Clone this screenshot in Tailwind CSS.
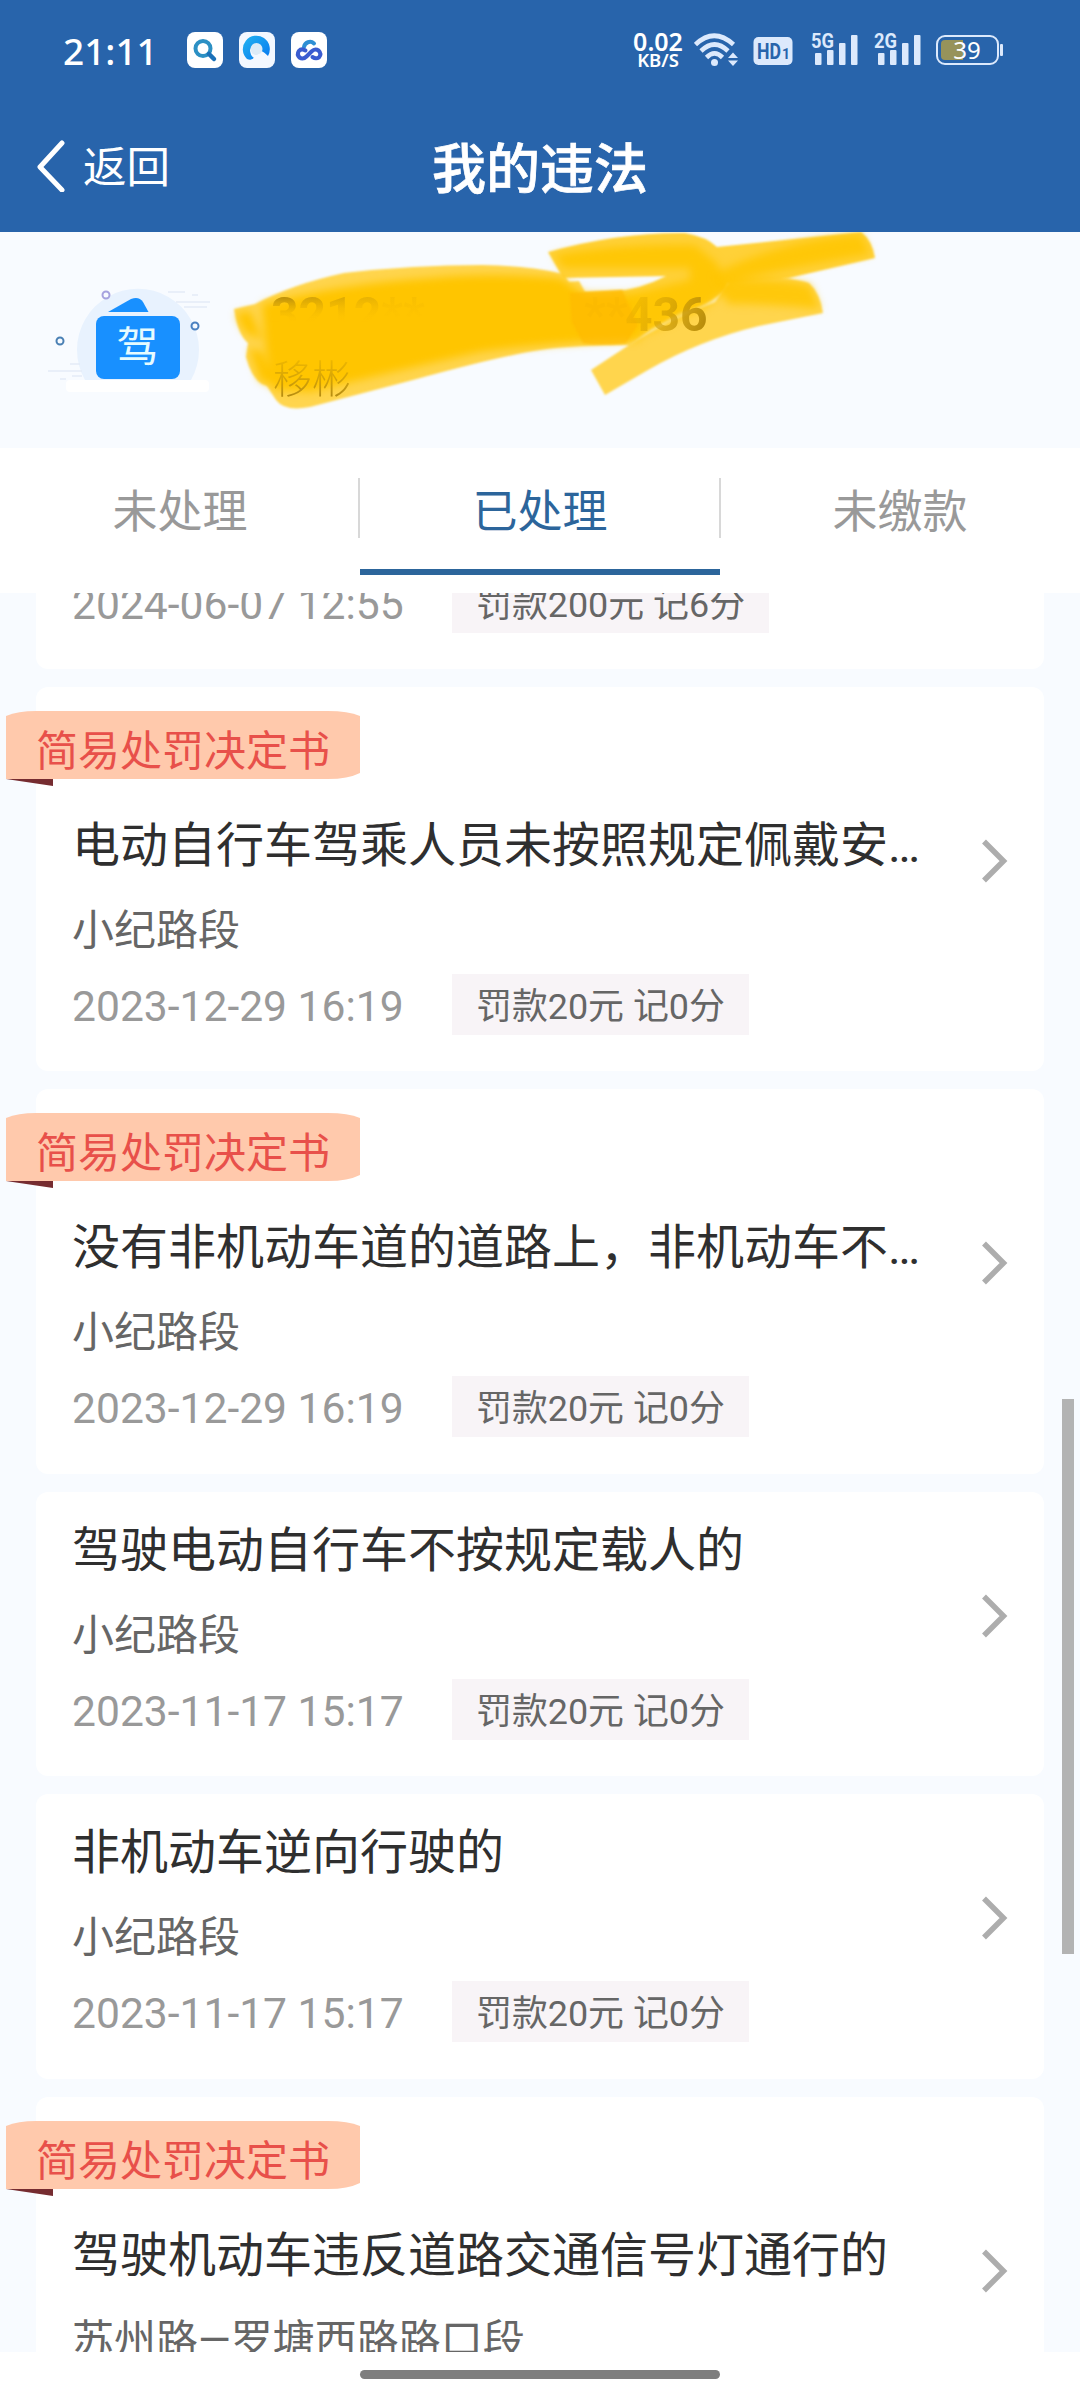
<!DOCTYPE html>
<html lang="zh-CN">
<head>
<meta charset="utf-8">
<title>我的违法</title>
<script src="https://cdn.jsdelivr.net/npm/@tailwindcss/browser@4"></script>
</head>
<body class="w-[1080px] h-[2400px] overflow-hidden bg-[#f8fbff] font-['Roboto','Noto_Sans_CJK_SC',sans-serif]">
<div class="relative flex flex-col h-[2400px]">

  <header class="h-[232px] shrink-0 bg-[#2864ab] text-white">
    <div class="flex items-center h-[100px] pl-[63px] pr-[77px]">
      <span class="w-[124px] text-[37px] font-medium leading-none font-['Noto_Sans',sans-serif]">21:11</span>
      <div class="flex gap-4">
        <svg width="36" height="36" viewBox="0 0 36 36"><rect width="36" height="36" rx="8" fill="#fff"/><circle cx="16" cy="16.500" r="7.500" fill="none" stroke="#2c90c4" stroke-width="4"/><path d="M22 22l5 5" stroke="#1a70b8" stroke-width="4.500" stroke-linecap="round"/></svg>
        <svg width="36" height="36" viewBox="0 0 36 36"><defs><linearGradient id="q" x1="0" y1="0" x2="1" y2="1"><stop offset="0" stop-color="#22b4f0"/><stop offset="1" stop-color="#0878f0"/></linearGradient></defs><rect width="36" height="36" rx="8" fill="#f3f8ff"/><path d="M8 27A13.500 13.500 0 1 1 29 24Q25 20 22.500 19A6 6 0 0 0 11 18Q11 23 15 26Q12 29 8 27Z" fill="url(#q)"/><circle cx="17.500" cy="17" r="6" fill="#dcebf7"/><path d="M9 29q5-1 8-5 4-4 8-2 2 3 6 3l-1 6H9z" fill="#f3f8ff"/></svg>
        <svg width="36" height="36" viewBox="0 0 36 36"><rect width="36" height="36" rx="8" fill="#fff"/><g fill="none" stroke-width="4" stroke-linecap="round"><path d="M13 15a6 6 0 0 1 10-3.500" stroke="#2e8fd4"/><path d="M14.500 18.500Q10.500 16 7.800 19Q5.500 22.500 8.500 25.500Q12 28 15.500 24.500L20.500 19.500Q24 16 27.500 18.500Q31 22 28 25.300Q25 27.500 21.500 25" stroke="#3a5cd0"/></g></svg>
      </div>
      <div class="ml-auto flex items-center">
        <div class="w-[58px] -ml-2 mr-[3px] text-center leading-none font-semibold">
          <div class="text-[25px] h-[20px] leading-[20px] font-['Noto_Sans',sans-serif]">0.02</div>
          <div class="text-[18.500px] h-[18px] leading-[18px] font-['Noto_Sans',sans-serif]">KB/S</div>
        </div>
        <svg class="ml-[4px]" width="46" height="36" viewBox="0 0 46 36" fill="#dce9fc"><g fill="none" stroke="#dce9fc" stroke-width="4.600"><path d="M1.500 12.500Q20 -5 39.500 12.500"/><path d="M7 19Q20.500 6 34 19"/><path d="M12.500 25.500Q20.500 17.500 28.500 25.500"/></g><circle cx="20.500" cy="30.500" r="3.500"/><path d="M34 26l5-5.500 5 5.500zM34 28.500l5 5.500 5-5.500z"/></svg>
        <svg class="ml-[13px]" width="40" height="30" viewBox="0 0 40 30"><rect x="0.500" y="2" width="39" height="28" rx="5" fill="#dce9fc"/><text x="4" y="24" font-size="22" font-weight="700" textLength="24" lengthAdjust="spacingAndGlyphs" fill="#2864ab">HD</text><text x="29" y="24" font-size="14" font-weight="700" fill="#2864ab">1</text></svg>
        <svg class="ml-[18px] overflow-visible" width="48" height="34" viewBox="0 0 48 34" fill="#dce9fc"><text x="0" y="15" font-size="20" font-weight="700" textLength="23" lengthAdjust="spacingAndGlyphs">5G</text><rect x="4" y="20" width="6.500" height="12" rx="1"/><rect x="16" y="17" width="6.500" height="15" rx="1"/><rect x="28" y="10" width="6.500" height="22" rx="1"/><rect x="40" y="2" width="6.500" height="30" rx="1"/></svg>
        <svg class="ml-[15px] overflow-visible" width="48" height="34" viewBox="0 0 48 34" fill="#dce9fc"><text x="0" y="15" font-size="20" font-weight="700" textLength="23" lengthAdjust="spacingAndGlyphs">2G</text><rect x="4" y="20" width="6.500" height="12" rx="1"/><rect x="16" y="17" width="6.500" height="15" rx="1"/><rect x="28" y="10" width="6.500" height="22" rx="1"/><rect x="40" y="2" width="6.500" height="30" rx="1"/></svg>
        <svg class="ml-[14px] overflow-visible" width="67" height="30" viewBox="0 0 67 30"><rect x="1" y="1" width="61" height="28" rx="8" fill="none" stroke="#dce9fc" stroke-width="2"/><path d="M9 5H27V25H9Q5 25 5 21V9Q5 5 9 5Z" fill="#97935a"/><rect x="64" y="9" width="3" height="12" rx="1" fill="#dce9fc"/><text x="31" y="23.500" font-size="24" text-anchor="middle" fill="#fff" font-family="Noto Sans">39</text></svg>
      </div>
    </div>
    <div class="relative flex items-center h-[132px] pl-9">
      <svg width="30" height="52" viewBox="0 0 30 52" fill="none" stroke="#fff" stroke-width="5" stroke-linecap="round" stroke-linejoin="round"><path d="M26 3L4 27L26 50"/></svg>
      <span class="ml-[17px] pt-[6px] text-[43.500px] leading-none">返回</span>
      <h1 class="absolute inset-x-0 top-[43px] text-center text-[54px] leading-[56px] font-medium [-webkit-text-stroke:0.700px_#fff]">我的违法</h1>
    </div>
  </header>

  <section class="relative h-[216px] shrink-0 pl-[40px] pt-[44px]">
    <svg width="180" height="130" viewBox="40 276 180 130">
      <path d="M85 380A61 61 0 1 1 191 380Z" fill="#e8f2fe"/>
      <g stroke="#e3ebf8" stroke-width="1.500"><path d="M168 292h17M192 295h6M176 302h34M184 307h23M70 364h10M48 371h34M72 376h10M60 379h6"/></g>
      <rect x="66" y="380" width="143" height="12" rx="4" fill="#fff"/>
      <path d="M108 312L131 299Q139 296 143 302L148.500 312Z" fill="#1890ff"/>
      <rect x="96" y="316" width="84" height="63" rx="8" fill="#1890ff"/>
      <text x="137.500" y="362" font-size="42" text-anchor="middle" fill="#e6fbff">驾</text>
      <g fill="none" stroke-width="2"><circle cx="106" cy="295" r="3.500" stroke="#a6a2df"/><circle cx="195" cy="326" r="3.500" stroke="#4a80c0"/><circle cx="60" cy="341" r="3.500" stroke="#4a80b4"/></g>
    </svg>
    <svg class="absolute left-[220px] top-0" width="680" height="190" viewBox="220 232 680 190">
      <defs>
        <filter id="s" x="-10%" y="-10%" width="120%" height="120%"><feGaussianBlur stdDeviation="1.300"/></filter>
        <filter id="m" x="-10%" y="-20%" width="120%" height="140%"><feGaussianBlur stdDeviation="4"/></filter>
        <linearGradient id="n1" gradientUnits="userSpaceOnUse" x1="0" y1="296" x2="0" y2="322"><stop offset="0" stop-color="#b68a08"/><stop offset="1" stop-color="#ffc400" stop-opacity="0"/></linearGradient>
        <linearGradient id="n2" gradientUnits="userSpaceOnUse" x1="635" y1="300" x2="705" y2="331"><stop offset="0" stop-color="#dca600" stop-opacity=".3"/><stop offset="1" stop-color="#b58a0a"/></linearGradient>
        <linearGradient id="n3" gradientUnits="userSpaceOnUse" x1="0" y1="356" x2="0" y2="397"><stop offset="0" stop-color="#e8b200" stop-opacity=".6"/><stop offset="1" stop-color="#b48a10"/></linearGradient>
      </defs>
      <g filter="url(#s)">
        <path d="M234 309L255 304Q293 284 344 273Q413 265 482 265Q530 266 563 274L569 282L579 281L585 292L626 290Q655 300 650 330L629 345Q574 345 540 350Q500 356 413 380L310 407Q285 412 276 400L267 386Q253 383 246 357L248 343Q238 335 234 309Z" fill="#ffd54d"/>
        <path d="M591 370L629 345Q665 322 715 302Q727 285 735 277Q790 276 809 283Q820 293 823 313L759 326Q700 340 648 370L605 395Z" fill="#ffd54d"/>
        <path d="M548 252Q620 232 685 233Q707 237 717 247L861 232Q872 240 875 258L789 278L727 283Q720 302 680 312L628 342L610 292Q640 290 666 276L563 278Z" fill="#ffd137"/>
      </g>
      <g filter="url(#m)" fill="#ffc500">
        <path d="M262 304Q340 284 430 278Q490 272 560 278L585 294L640 294L640 340Q550 342 480 352Q400 370 310 392L274 390L266 350Z"/>
        <path d="M554 255Q620 243 695 245L718 264L726 290L704 308L630 340L626 295L690 280L690 268L564 268Z" opacity=".9"/>
        <path d="M712 275Q780 240 861 234L870 254Q780 270 735 280Q780 278 810 285L820 309Q770 304 728 304Z" opacity=".85"/>
        <path d="M236 314L250 311L262 340L245 332ZM249 348L262 352L278 388L260 380Z"/>
      </g>
      <path filter="url(#s)" d="M570 293L622 290L638 325L626 343Q600 346 583 343L572 322Z" fill="#ffb800" opacity=".65"/>
      <g font-family="Roboto" font-weight="700" font-size="48"><text x="271" y="331" fill="url(#n1)">3<tspan fill-opacity=".65">2</tspan><tspan fill-opacity=".5">1</tspan><tspan fill-opacity=".35">2</tspan><tspan fill-opacity=".1">**</tspan></text><text x="584" y="331" fill="#c89800" fill-opacity=".06">**</text><text x="625" y="331" fill="url(#n2)">436</text></g>
      <text x="273" y="393" font-size="39" font-weight="300" fill="url(#n3)">移彬</text>
    </svg>
  </section>

  <nav class="relative z-10 flex h-[145px] shrink-0 bg-white text-[45px] leading-[129px] text-center text-[#999]">
    <div class="flex-1">未处理</div>
    <div class="relative flex-1 h-[127px] border-b-[6px] border-[#2c659b] text-[#2c659b]">已处理
      <i class="absolute left-[-2px] top-[30px] w-[2px] h-[60px] bg-[#d8d8d8]"></i>
      <i class="absolute right-[-1px] top-[30px] w-[2px] h-[60px] bg-[#d8d8d8]"></i>
    </div>
    <div class="flex-1">未缴款</div>
  </nav>

  <main class="relative flex-1 overflow-hidden">
    <div id="list" class="-mt-[208.500px] flex flex-col gap-[18px] px-9"></div>
    <div class="absolute left-[1062px] top-[806px] w-3 h-[555px] bg-[#b3b3b3]"></div>
  </main>

  <footer class="relative z-10 flex h-12 shrink-0 justify-center bg-white pt-[18px]">
    <div class="w-[360px] h-[9px] rounded-full bg-[#7e7e7e]"></div>
  </footer>
</div>
<script>
const rows = [
  [0, '', '', '2024-06-07 12:55', '罚款200元 记6分'],
  [1, '电动自行车驾乘人员未按照规定佩戴安…', '小纪路段', '2023-12-29 16:19', '罚款20元 记0分'],
  [1, '没有非机动车道的道路上，非机动车不…', '小纪路段', '2023-12-29 16:19', '罚款20元 记0分'],
  [0, '驾驶电动自行车不按规定载人的', '小纪路段', '2023-11-17 15:17', '罚款20元 记0分'],
  [0, '非机动车逆向行驶的', '小纪路段', '2023-11-17 15:17', '罚款20元 记0分'],
  [1, '驾驶机动车违反道路交通信号灯通行的', '苏州路—罗塘西路路口段', '', '']
];
document.getElementById('list').innerHTML = rows.map(([tag, title, place, date, fine]) => `
<article class="relative rounded-xl bg-white ${tag ? 'h-[384.300px]' : 'h-[284.700px]'} pt-6 pl-9">
  ${tag ? `<div class="relative -ml-[66px] mb-[32px] w-[354px] h-[68px] pl-[30px] text-[42px] leading-[82px] text-[#e8504a]">
    <svg class="absolute left-0 top-0" width="354" height="76" viewBox="0 0 354 76"><path d="M0 5Q12 0 30 0H322Q342 0 354 5V62Q342 68 322 68H0Z" fill="#ffc9ac"/><path d="M0 68H47V75Z" fill="#762c30"/></svg>
    <span class="relative">简易处罚决定书</span></div>` : ''}
  <h2 class="w-[900px] h-[66px] text-[48px] leading-[70px] text-[#2f2f2f] whitespace-nowrap">${title}</h2>
  <p class="mt-[21px] h-[60px] text-[42px] leading-[66px] text-[#666] whitespace-nowrap">${place}</p>
  <div class="mt-[16px] flex h-[61px] items-start">
    <time class="w-[380px] text-[42.600px] leading-[65px] text-[#999] whitespace-nowrap">${date}</time>
    ${fine ? `<span class="h-[61px] px-[24px] text-[35.900px] leading-[66px] bg-[#f8f4f7] text-[#666] whitespace-nowrap">${fine}</span>` : ''}
  </div>
  <svg class="absolute right-[36px] ${tag ? 'top-[150px]' : 'top-[100px]'}" width="28" height="48" viewBox="0 0 28 48" fill="none" stroke="#adadad" stroke-width="5.500"><path d="M4 4.500L23.500 24L4 43.500"/></svg>
</article>`).join('');
</script>
</body>
</html>
